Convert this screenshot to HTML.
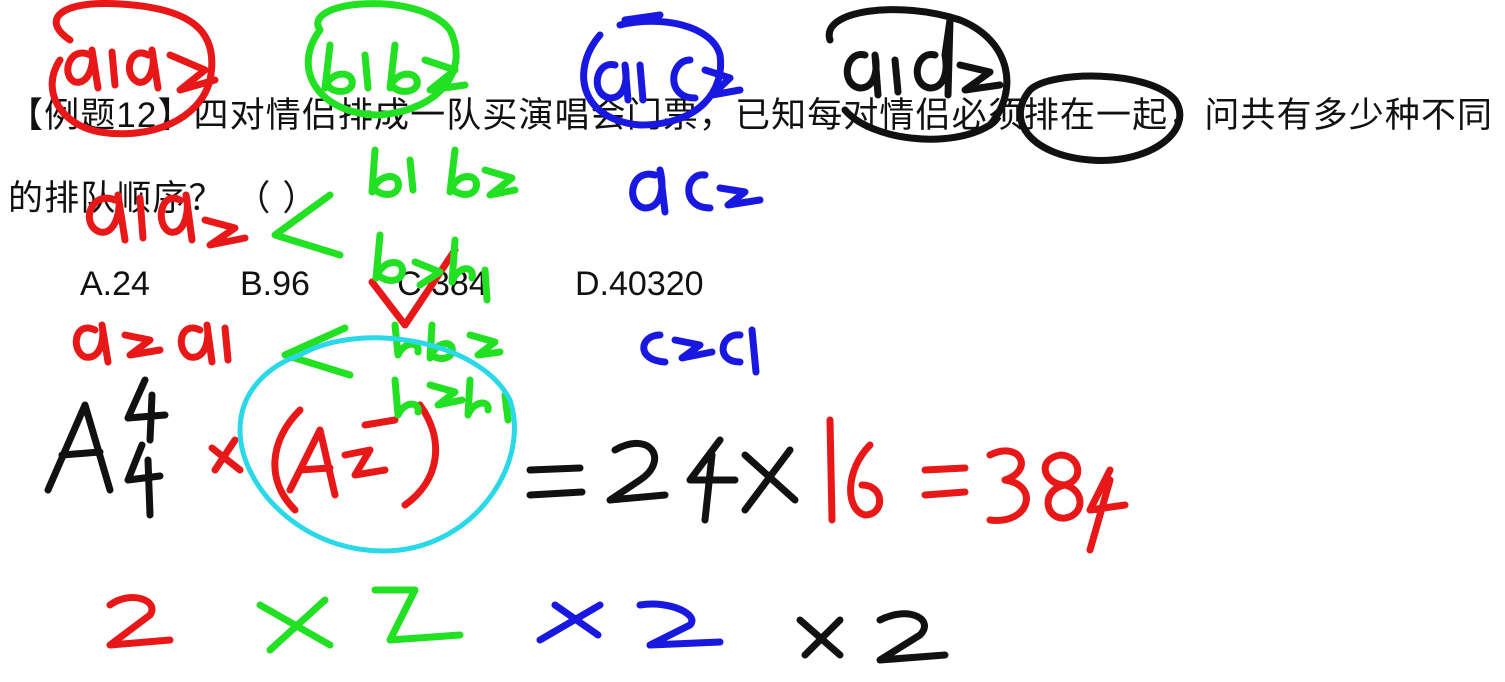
<!DOCTYPE html>
<html><head><meta charset="utf-8"><style>
html,body{margin:0;padding:0;background:#fff;width:1505px;height:682px;overflow:hidden;position:relative}
.t{position:absolute;font-family:"Liberation Sans","Noto Sans CJK SC",sans-serif;color:#111;white-space:nowrap}
svg{position:absolute;left:0;top:0}
</style></head><body>
<div class="t" style="left:8px;top:94px;font-size:35px;line-height:44px;letter-spacing:1.1px">【例题12】四对情侣排成一队买演唱会门票，已知每对情侣必须排在一起，问共有多少种不同</div>
<div class="t" style="left:8px;top:177px;font-size:35px;line-height:44px;letter-spacing:1.1px">的排队顺序？ （ ）</div>
<div class="t" style="left:80px;top:264px;font-size:34px;line-height:40px">A.24</div>
<div class="t" style="left:240px;top:264px;font-size:34px;line-height:40px">B.96</div>
<div class="t" style="left:397px;top:264px;font-size:34px;line-height:40px">C.384</div>
<div class="t" style="left:575px;top:264px;font-size:34px;line-height:40px">D.40320</div>
<svg width="1505" height="682" fill="none" stroke-linecap="round" stroke-linejoin="round" stroke-width="7">
<g stroke="#e81818">
<path d="M70 40 C40 20 60 0 120 4 C190 8 220 30 210 80 C200 120 150 140 100 132 C60 125 40 90 60 60"/>
<path d="M90 55 C70 45 60 75 75 82 C88 85 95 65 92 50 L98 88 M112 52 L115 85 M148 55 C130 45 122 75 138 82 C150 85 156 65 152 50 L158 88 M170 55 L205 70 L180 90 L215 80"/>
<path d="M115 200 C90 190 80 225 100 232 C115 235 122 210 118 195 L125 240 M140 198 L143 238 M180 200 C160 190 155 225 170 232 C185 235 190 210 186 195 L192 240 M205 220 L235 228 L210 245 L245 238"/>
<path d="M95 330 C75 320 70 350 85 357 C100 360 105 340 102 325 L108 362 M125 335 L150 340 L130 355 L160 350 M200 330 C180 320 175 350 190 357 C205 360 210 340 207 325 L212 362 M225 328 L228 360"/>
<path d="M372 282 L405 325 L455 250"/>
<path d="M215 470 L235 440 M212 448 L240 470"/>
<path d="M300 410 C270 440 265 480 295 510 M290 490 L320 430 L335 495 M300 470 L330 468 M345 455 L370 450 L355 475 L385 470 M365 425 L395 420 M420 405 C445 440 440 480 405 505"/>
<path d="M830 420 L832 520 M870 445 C845 470 845 510 865 515 C885 515 885 485 862 485"/>
<path d="M925 470 L965 468 M925 495 L965 492 M990 455 C1020 440 1035 470 1005 480 C1040 485 1030 525 990 520 M1060 455 C1035 460 1045 485 1065 485 C1085 480 1080 455 1060 455 M1065 485 C1040 490 1045 520 1065 518 C1085 515 1085 490 1065 485 M1110 470 L1090 510 L1125 505 M1110 480 L1090 550"/>
<path d="M110 605 C130 590 160 600 150 615 L110 645 L170 640"/>
</g>
<g stroke="#22e022">
<path d="M320 30 C300 0 420 -10 450 30 C470 70 440 110 380 115 C320 115 290 70 320 30"/>
<path d="M330 45 L325 88 C330 70 355 70 352 85 C348 95 330 92 328 85 M365 55 L368 88 M395 45 L390 88 C395 70 420 70 417 85 C412 95 395 92 392 85 M425 60 L455 70 L430 90 L465 85"/>
<path d="M375 150 L372 192 C378 172 402 172 398 188 C394 198 378 195 374 188 M410 160 L413 190 M455 150 L450 192 C456 172 480 172 476 188 C472 198 456 195 452 188 M485 170 L512 178 L490 195 L515 190"/>
<path d="M330 195 L275 235 L340 255"/>
<path d="M380 235 L376 278 C382 258 406 258 402 274 C398 284 382 281 378 274 M415 262 L440 272 L420 285 M455 240 L452 282 C458 265 475 265 472 278 M485 270 L487 300"/>
<path d="M345 328 L285 355 L350 375"/>
<path d="M395 325 L398 355 C405 340 420 342 418 352 M432 325 L430 358 C436 340 455 340 452 352 C450 360 438 360 432 355 M470 335 L495 342 L478 355 L500 352"/>
<path d="M395 380 L398 415 C405 400 420 402 418 412 M430 385 L455 392 L438 405 L462 400 M470 380 L468 415 C474 400 490 400 488 410 M505 395 L508 420"/>
<path d="M260 605 L330 645 M325 600 L270 650 M375 590 L415 590 L390 640 L460 635"/>
</g>
<g stroke="#1818e0">
<path d="M600 35 C570 70 580 120 640 125 C700 125 725 90 720 55 C712 25 660 15 620 25 M625 20 L660 15"/>
<path d="M615 65 C595 60 590 95 610 98 C625 98 628 80 625 65 L628 100 M640 65 L643 100 M690 60 C670 60 665 98 695 98 M705 70 L730 78 L712 95 L740 90"/>
<path d="M655 175 C630 168 625 205 645 208 C660 208 665 190 660 170 L665 212 M705 175 C685 172 680 208 710 208 M720 188 L745 192 L728 205 L760 200"/>
<path d="M660 335 C640 335 635 360 665 362 M675 340 L700 345 L682 358 L712 352 M740 335 C720 333 715 362 740 362 M752 330 L756 372"/>
<path d="M540 640 L600 605 M555 605 L598 635 M640 605 C670 600 700 615 690 625 L650 645 L720 642"/>
</g>
<g stroke="#111">
<path d="M830 40 C820 10 900 0 960 20 C1010 40 1020 90 990 125 C950 150 870 140 845 110"/>
<path d="M865 55 C845 50 840 85 860 88 C875 88 878 70 875 55 L878 95 M895 60 L898 92 M935 55 C915 50 910 85 930 88 C945 88 948 70 945 55 L950 20 L948 95 M960 65 L990 72 L965 90 L1000 85"/>
<path d="M1030 90 C1050 70 1150 70 1175 100 C1195 130 1150 165 1090 160 C1030 155 1005 120 1030 90"/>
<path d="M48 490 L85 405 L110 490 M62 455 L100 452 M145 380 L128 418 L165 415 M152 395 L150 440 M142 445 L128 480 L160 476 M148 460 L150 515"/>
<path d="M530 470 L580 468 M530 495 L582 492 M615 450 C650 430 670 460 640 480 L610 500 L665 495 M720 440 L690 480 L735 480 M712 455 L705 520 M745 455 L795 500 M790 450 L745 510"/>
<path d="M800 620 L840 655 M840 620 L805 655 M880 620 C910 605 935 620 920 635 L880 660 L945 655"/>
</g>
<g stroke="#2ad8e8" stroke-width="5">
<path d="M300 355 C360 320 480 340 510 400 C530 460 480 540 400 550 C310 560 240 490 240 430 C240 390 270 365 300 355"/>
</g>
</svg>
</body></html>
